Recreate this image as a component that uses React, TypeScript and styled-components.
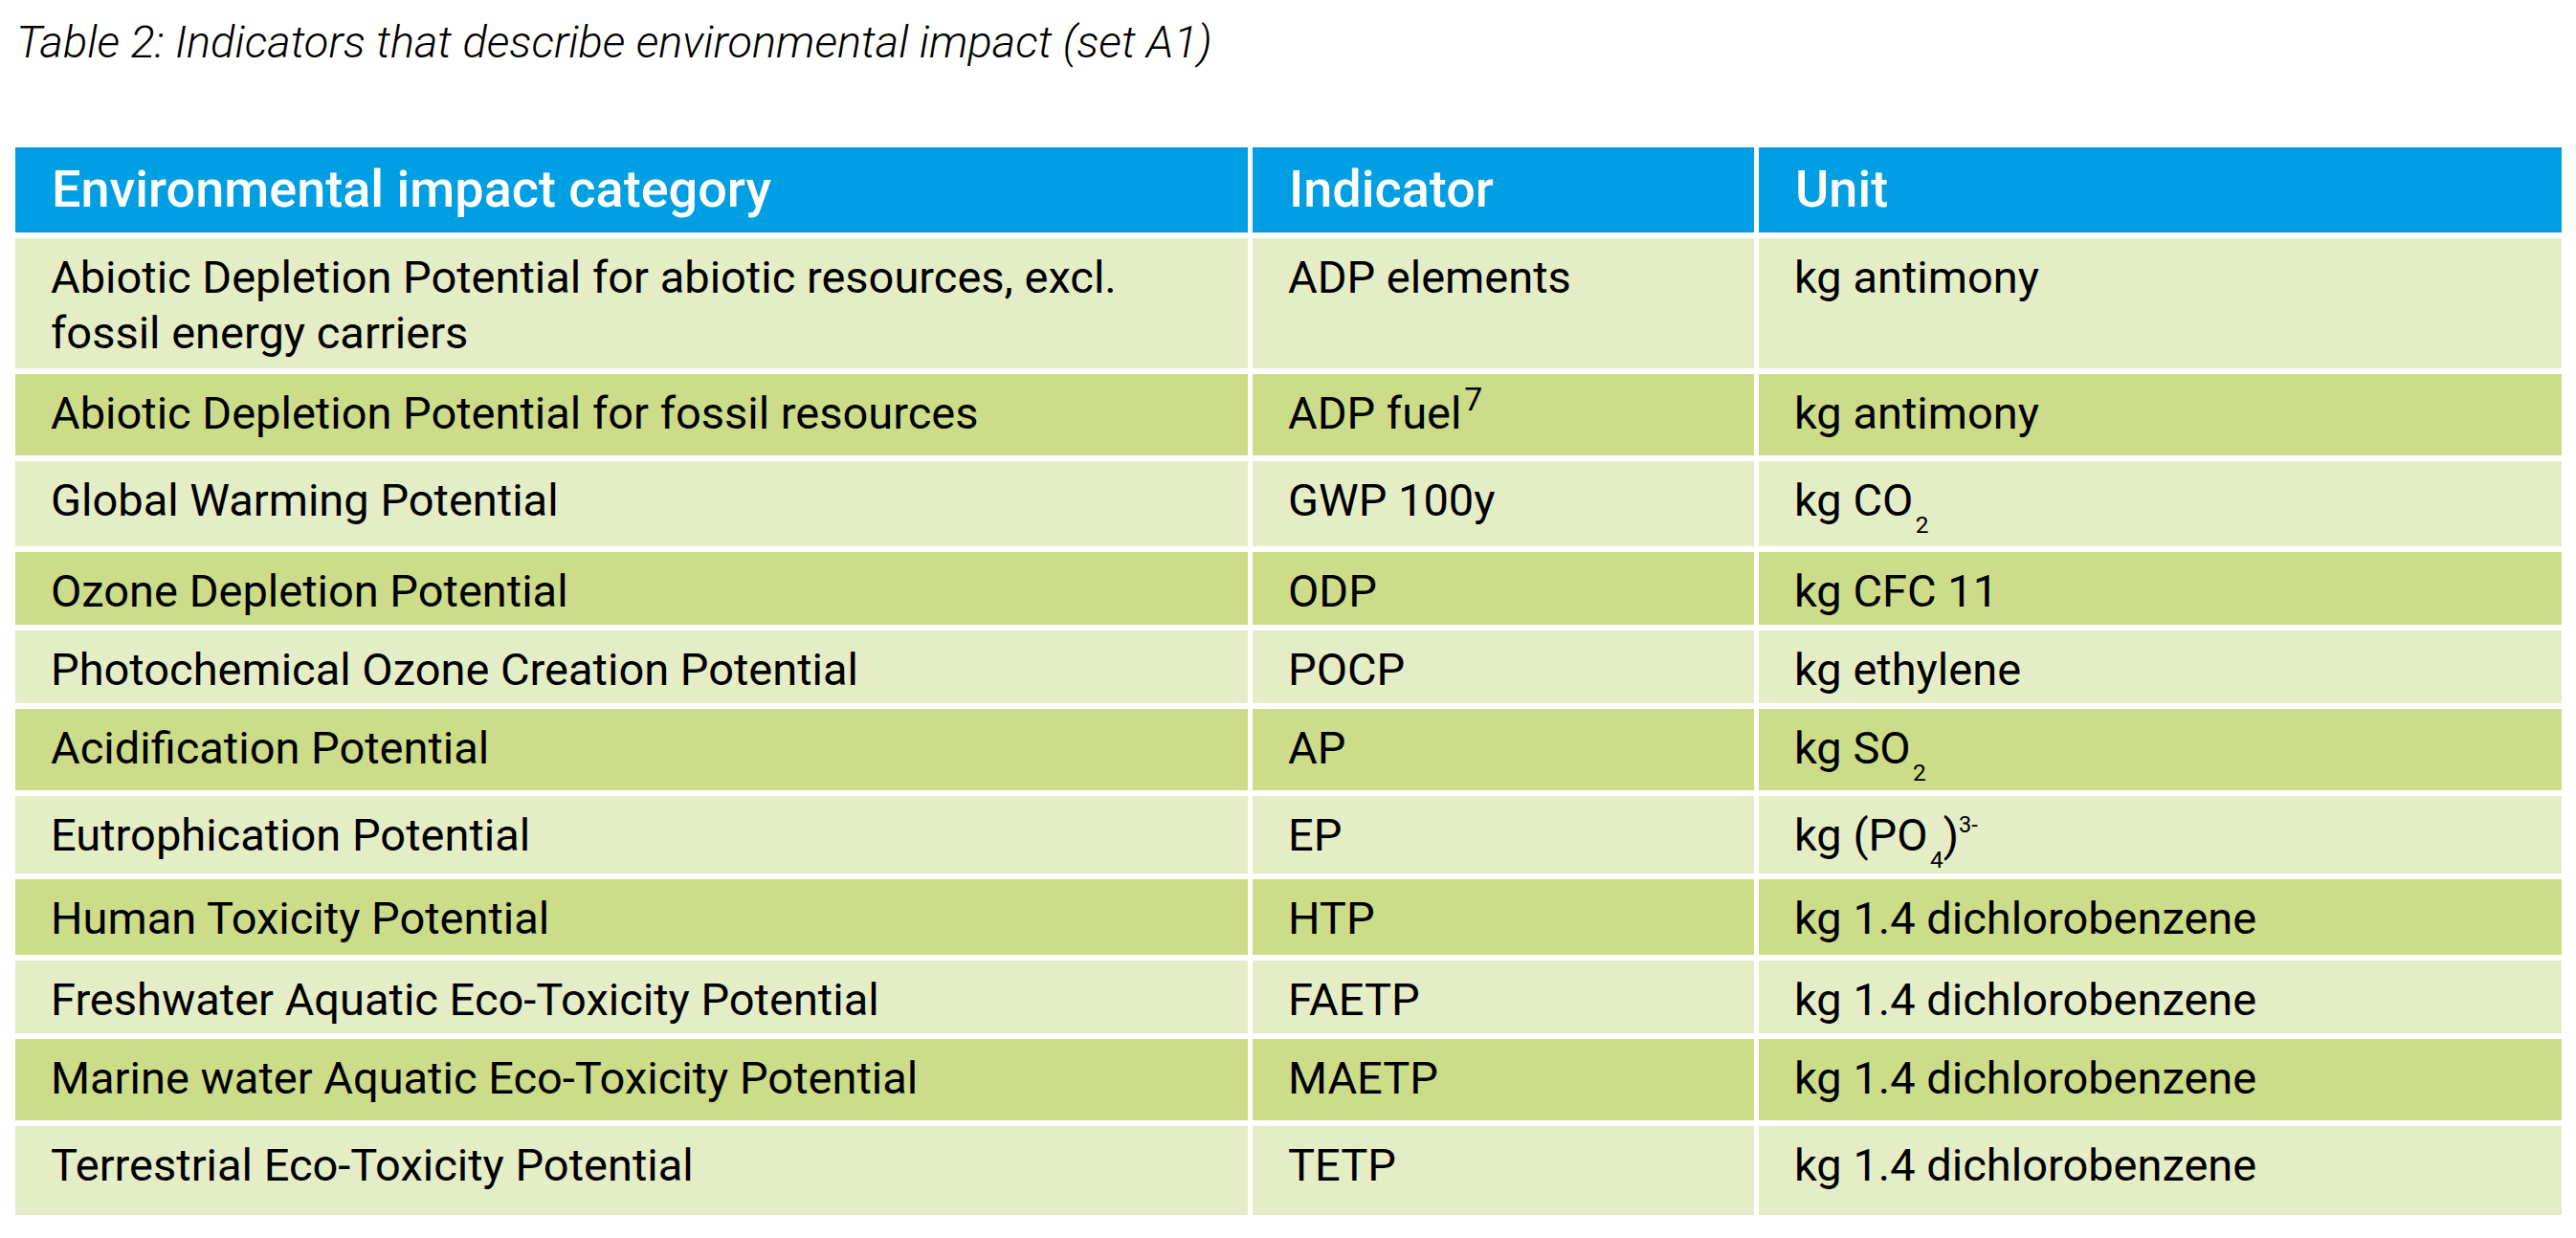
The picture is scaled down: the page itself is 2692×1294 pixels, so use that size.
import React from "react"
import styled, { createGlobalStyle } from "styled-components"

type Row = {
  category: React.ReactNode
  indicator: React.ReactNode
  unit: React.ReactNode
  height: number
}

const GlobalStyle = createGlobalStyle`
  html, body {
    margin: 0;
    padding: 0;
    background: #ffffff;
  }
  body {
    font-family: Roboto, "Liberation Sans", sans-serif;
    color: #000000;
  }
`

const S = {
  Page: styled.div`
    padding: 15px 15px 0 16px;
  `,
  Caption: styled.div`
    font-family: Roboto, "Liberation Sans", sans-serif;
    font-style: italic;
    font-weight: 300;
    font-size: 47px;
    line-height: 58px;
    padding-left: 1px;
    margin-bottom: 81px;
  `,
  Table: styled.div`
    display: flex;
    flex-direction: column;
    gap: 6px;
    width: 2661px;
  `,
  Row: styled.div<{ $h: number }>`
    display: grid;
    grid-template-columns: 1288px 524px 839px;
    column-gap: 5px;
    height: ${(p) => p.$h}px;
  `,
  HeadCell: styled.div`
    background: #009fe3;
    color: #ffffff;
    font-weight: 500;
    font-size: 54px;
    line-height: 58px;
    padding: 15px 38px 0 38px;
  `,
  Cell: styled.div<{ $dark?: boolean }>`
    background: ${(p) => (p.$dark ? "#cddc89" : "#e5edc6")};
    font-size: 47px;
    line-height: 58px;
    padding: 12px 38px 0 37px;
  `,
  Note: styled.sup`
    font-size: 0.72em;
    line-height: 0;
    vertical-align: 0.55em;
    margin-left: 0.08em;
  `,
  Sub: styled.sub`
    font-size: 0.52em;
    line-height: 0;
    vertical-align: -0.75em;
    margin-left: 0.1em;
  `,
  Charge: styled.sup`
    font-size: 0.5em;
    line-height: 0;
    vertical-align: 0.8em;
  `,
}

const rows: Row[] = [
  {
    category: "Abiotic Depletion Potential for abiotic resources, excl. fossil energy carriers",
    indicator: "ADP elements",
    unit: "kg antimony",
    height: 136,
  },
  {
    category: "Abiotic Depletion Potential for fossil resources",
    indicator: (
      <>
        ADP fuel<S.Note>7</S.Note>
      </>
    ),
    unit: "kg antimony",
    height: 85,
  },
  {
    category: "Global Warming Potential",
    indicator: "GWP 100y",
    unit: (
      <>
        kg CO<S.Sub>2</S.Sub>
      </>
    ),
    height: 89,
  },
  { category: "Ozone Depletion Potential", indicator: "ODP", unit: "kg CFC 11", height: 76 },
  { category: "Photochemical Ozone Creation Potential", indicator: "POCP", unit: "kg ethylene", height: 76 },
  {
    category: "Acidification Potential",
    indicator: "AP",
    unit: (
      <>
        kg SO<S.Sub>2</S.Sub>
      </>
    ),
    height: 85,
  },
  {
    category: "Eutrophication Potential",
    indicator: "EP",
    unit: (
      <>
        kg (PO<S.Sub>4</S.Sub>)<S.Charge>3-</S.Charge>
      </>
    ),
    height: 81,
  },
  { category: "Human Toxicity Potential", indicator: "HTP", unit: "kg 1.4 dichlorobenzene", height: 79 },
  { category: "Freshwater Aquatic Eco-Toxicity Potential", indicator: "FAETP", unit: "kg 1.4 dichlorobenzene", height: 76 },
  { category: "Marine water Aquatic Eco-Toxicity Potential", indicator: "MAETP", unit: "kg 1.4 dichlorobenzene", height: 85 },
  { category: "Terrestrial Eco-Toxicity Potential", indicator: "TETP", unit: "kg 1.4 dichlorobenzene", height: 93 },
]

export default function App() {
  return (
    <>
      <GlobalStyle />
      <S.Page>
        <S.Caption>Table 2: Indicators that describe environmental impact (set A1)</S.Caption>
        <S.Table>
          <S.Row $h={89}>
            <S.HeadCell>Environmental impact category</S.HeadCell>
            <S.HeadCell>Indicator</S.HeadCell>
            <S.HeadCell>Unit</S.HeadCell>
          </S.Row>
          {rows.map((row, i) => (
            <S.Row key={i} $h={row.height}>
              <S.Cell $dark={i % 2 === 1}>{row.category}</S.Cell>
              <S.Cell $dark={i % 2 === 1}>{row.indicator}</S.Cell>
              <S.Cell $dark={i % 2 === 1}>{row.unit}</S.Cell>
            </S.Row>
          ))}
        </S.Table>
      </S.Page>
    </>
  )
}
